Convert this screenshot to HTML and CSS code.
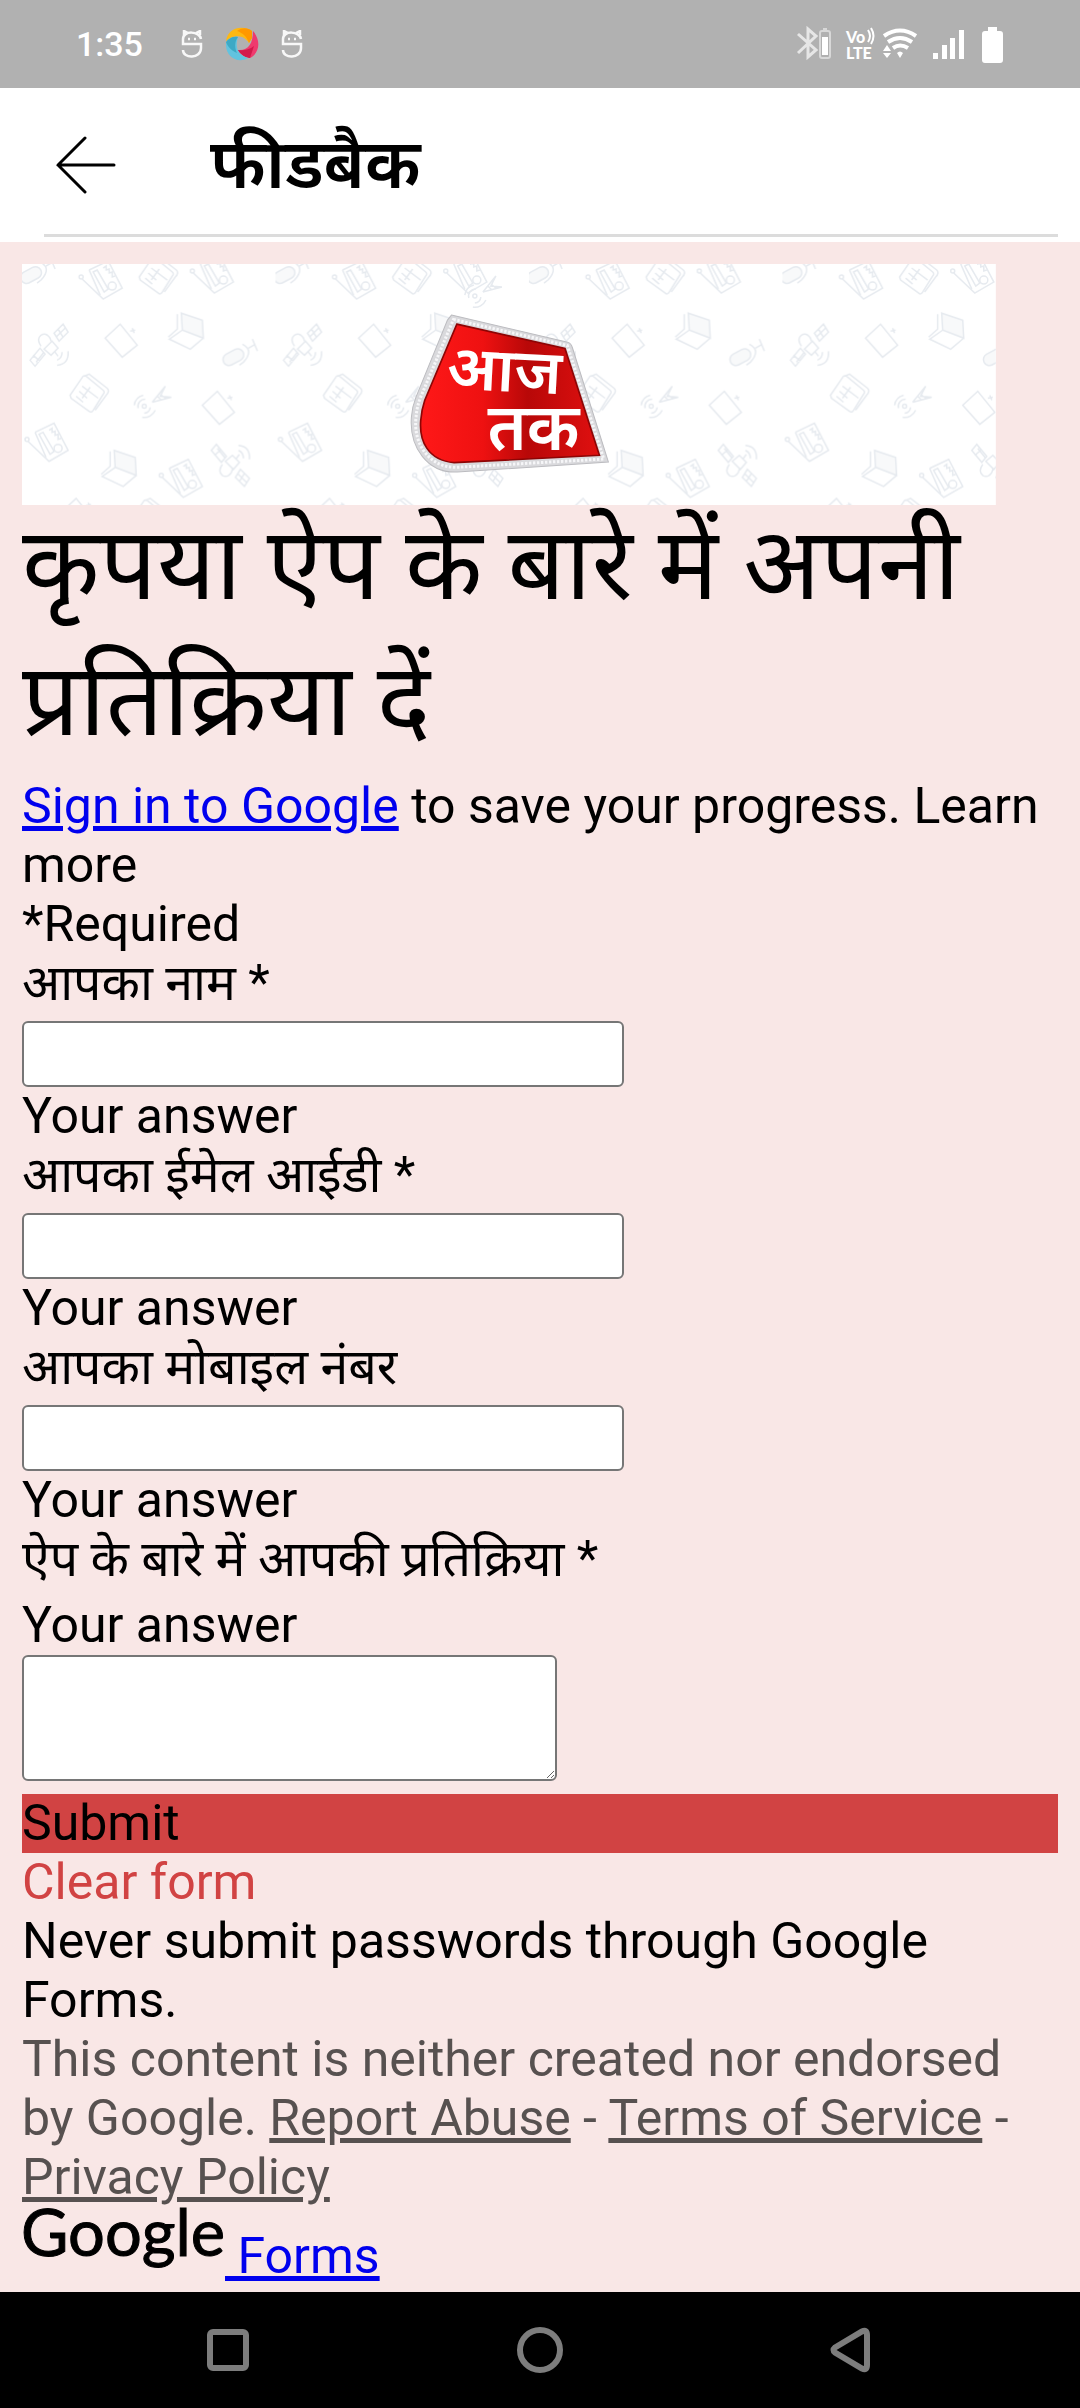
FILE: index.html
```html
<!DOCTYPE html>
<html lang="hi">
<head>
<meta charset="utf-8">
<meta name="viewport" content="width=device-width, initial-scale=1">
<title>फीडबैक</title>
<link rel="stylesheet" href="styles.css">
</head>
<body>
<div class="status-bar">
  <div class="status-left">
    <time class="clock">1:35</time>
    <svg class="badge-icon" width="22" height="28" viewBox="0 0 22 28" fill="none" stroke="#f8f8f8" stroke-width="2.500"><path d="M20 9C19 1 2 0 2 9V14H20V18C20 29 2 29 2 20"/><path d="M3 5V1L7 3M19 5V1L15 3"/><path d="M7 9H9M13 9H15"/></svg>
    <svg class="ball-icon" width="34" height="34" viewBox="0 0 34 34"><path d="M1 14C3 0 18-2 27 4V11L24 16C18 7 8 8 1 14Z" fill="#fdb813"/><path d="M12 4C18 0 23 1 27 4V11L24 16C22 10 18 6 12 4Z" fill="#ff9800"/><path d="M28 4C36 13 35 26 25 31C20 29 15 27 13 23C23 24 28 17 28 4Z" fill="#ef3a6e"/><path d="M13 23C18 24 24 23 29 19L25 31C20 31 15 27 13 23Z" fill="#d3194b"/><path d="M13 10C9 23 15 29 23 31C13 37 1 30 1 18C1 12 7 9 13 10Z" fill="#62c3df"/><path d="M13 10C9 15 10 22 12 26C5 23 2 18 1 15C4 11 8 9 13 10Z" fill="#3da9c5"/></svg>
    <svg class="badge-icon" width="22" height="28" viewBox="0 0 22 28" fill="none" stroke="#f8f8f8" stroke-width="2.500"><path d="M20 9C19 1 2 0 2 9V14H20V18C20 29 2 29 2 20"/><path d="M3 5V1L7 3M19 5V1L15 3"/><path d="M7 9H9M13 9H15"/></svg>
  </div>
  <svg class="status-right" width="208" height="38" viewBox="0 0 208 38" fill="#fff">
    <path d="M2 9 20 25 12 32V4L20 11 2 28" fill="none" stroke="#e6e6e6" stroke-width="3"/>
    <rect x="24" y="6" width="10" height="27" rx="2" fill="none" stroke="#d8d8d8" stroke-width="2"/><path d="M27 3H31V5H27Z" fill="#d8d8d8"/><path d="M26 12H32V30H26Z"/>
    <text x="50" y="18" font-size="16" class="volte">Vo</text><path d="M72 5Q76 11 72 17M75 3Q80 11 75 19" fill="none" stroke="#fff" stroke-width="2"/><text x="50" y="34" font-size="16" class="volte">LTE</text>
    <g fill="none" stroke="#fff" stroke-width="4"><path d="M88 11Q104 0 120 11"/><path d="M92 17Q104 9 116 17"/><path d="M97 23Q104 18 112 23"/></g><path d="M101 28Q104 25 107 28L104 33Z"/><path d="M87 26 91 20 95 26ZM87 28H95L91 33Z"/>
    <path d="M137 28H142V34H137ZM146 20H151V34H146ZM154 13H159V34H154ZM163 5H168V34H163Z"/>
    <path d="M192 2H201V6H204Q207 6 207 9V35Q207 38 204 38H189Q186 38 186 35V9Q186 6 189 6H192Z"/>
  </svg>
</div>

<header class="app-bar">
  <div class="app-bar-inner">
    <button class="back" type="button" aria-label="Back"><svg width="60" height="58" viewBox="0 0 60 58" fill="none" stroke="#000" stroke-width="3" stroke-linecap="round"><path d="M29 2 2 29 29 56M2 29H58"/></svg></button>
    <h2 class="title">फीडबैक</h2>
  </div>
</header>

<main class="page">
  <svg class="banner" viewBox="0 0 972 241" role="img" aria-label="आज तक">
    <defs>
      <g id="tv"><path d="M-16-2-1-16 16 5 1 17Z"/><path d="M9-9 14-10M11-12 13-7"/></g>
      <g id="laptop"><path d="M-5-18 16-11 17 7-4-1Z" fill="#f8f9fa"/><path d="M-4-1-17 8 4 18 17 7M-9-17V-2L-18 6"/></g>
      <g id="mic"><rect x="-18" y="-3" width="22" height="12" rx="6" transform="rotate(-28 -7 3)" fill="#f8f9fa"/><path d="M2-10Q14-4 3 8L-1 11M8-6 15-10M12-15 17-3"/></g>
      <g id="news"><path d="M-20 2-7-17Q-6-18-4-17L13-3Q15-1 13 1L3 17Q1 20-1 18L-19 5ZM-6-17-1-19 17-5Q20-2 16 2L5 17M-8-7 8 5M-11-2-3 5M-14 3-7 9M0-6-8 5"/></g>
      <g id="antenna"><circle cx="-8" cy="4" r="2"/><path d="M-14 6A7 7 0 0 1-7-3M-2 5A7 7 0 0 1-8 11M-18 3A12 12 0 0 1-9-7M3 8A12 12 0 0 1-10 15M0 0 13-16 10-10 8-6 19-5 0 0M5-6 9-2M8-8 13-4"/></g>
      <g id="radio"><path d="M-12-10 7-19 21 8 2 19-19-1"/><path d="M-12-10-1 15"/><circle cx="-20" cy="-3" r="2"/><circle cx="11" cy="6" r="4"/><path d="M-8-8-4-10 7 9 3 12ZM2-12 5-14 5-10 8-11 8-7 11-8 11-3 14-4"/></g>
      <g id="sat"><path d="M4-12 13-21 18-13 9-4ZM8-16 13-8M6-8 15-17M-20 15-10 3-5 9-15 21ZM-17 10-10 16M-14 17-6 7M-9 1Q-14-6-9-10-4-13 0-7L1-4M-6 4 2-4 8 3 1 10ZM5 7 8 11M18 6Q19 19 7 20M12 7Q12 13 7 15"/></g>
      <pattern id="doodles" width="253" height="260" patternUnits="userSpaceOnUse">
        <g fill="none" stroke="#e6eaef" stroke-width="1.500">
          <use href="#mic" x="16" y="8"/><use href="#radio" x="79" y="16"/><use href="#news" x="137" y="11"/><use href="#radio" x="190" y="10"/>
          <use href="#sat" x="28" y="81"/><use href="#tv" x="99" y="76"/><use href="#laptop" x="164" y="67"/><use href="#mic" x="218" y="90"/>
          <use href="#news" x="68" y="129"/><use href="#antenna" x="130" y="138"/><use href="#tv" x="196" y="143"/>
          <use href="#radio" x="25" y="178"/><use href="#laptop" x="97" y="204"/><use href="#radio" x="159" y="214"/><use href="#sat" transform="translate(209 201) scale(1 -1)"/>
          <use href="#tv" x="55" y="250"/><use href="#news" x="129" y="253"/>
        </g>
      </pattern>
      <linearGradient id="red" x1="0" y1="0" x2="1" y2="0"><stop offset="0" stop-color="#ff1818"/><stop offset=".35" stop-color="#ee1111"/><stop offset=".6" stop-color="#b80808"/><stop offset="1" stop-color="#e01010"/></linearGradient>
    </defs>
    <rect width="972" height="241" fill="#fff"/>
    <rect width="972" height="241" fill="url(#doodles)"/>
    <use href="#antenna" x="460" y="28" fill="none" stroke="#e6eaef" stroke-width="1.500"/>
    <g transform="translate(368 36) scale(.3333)">
      <path d="M182 45 530 126Q540 129 544 142L652 485 200 515C110 520 55 440 62 350Q64 320 76 290L170 60Z" fill="#d9d9dc" stroke="#bcbcc0" stroke-width="3"/>
      <path d="M188 58 529 136 638 476 194 501C115 500 66 430 76 350Q78 320 90 290Z" fill="none" stroke="#f6f6f8" stroke-width="9" stroke-dasharray="7 5"/>
      <path d="M198 72 522 145 625 465 190 487C110 480 85 420 90 360Q92 330 102 300Z" fill="url(#red)" stroke="#8d0505" stroke-width="5"/>
      <g class="logo-text">
        <text x="166" y="264" font-size="184" transform="rotate(3 166 264)">आज</text>
        <text x="290" y="448" font-size="196">तक</text>
      </g>
    </g>
  </svg>

  <h1 class="form-title">कृपया ऐप के बारे में अपनी प्रतिक्रिया दें</h1>

  <p><a href="#signin">Sign in to Google</a> to save your progress. Learn more</p>
  <p>*Required</p>

  <form class="form">
    <label for="name">आपका नाम *</label>
    <input class="field" id="name" type="text" aria-describedby="name-hint">
    <p id="name-hint">Your answer</p>
    <label for="email">आपका ईमेल आईडी *</label>
    <input class="field" id="email" type="text" aria-describedby="email-hint">
    <p id="email-hint">Your answer</p>
    <label for="mobile">आपका मोबाइल नंबर</label>
    <input class="field" id="mobile" type="text" aria-describedby="mobile-hint">
    <p id="mobile-hint">Your answer</p>
    <label for="comment">ऐप के बारे में आपकी प्रतिक्रिया *</label>
    <p class="comment-hint" id="comment-hint">Your answer</p>
    <textarea class="comment" id="comment" aria-describedby="comment-hint"></textarea>
    <button class="submit" type="submit">Submit</button>
    <button class="clear" type="reset">Clear form</button>
  </form>

  <p>Never submit passwords through Google Forms.</p>
  <p class="legal">This content is neither created nor endorsed by Google. <a href="#abuse">Report Abuse</a> - <a href="#terms">Terms of Service</a> - <a href="#privacy">Privacy Policy</a></p>
  <p><a href="#forms"><svg class="google" width="203" height="66" viewBox="0 0 203 66"><text x="-1" y="49">Google</text></svg> Forms</a></p>
</main>

<nav class="nav-bar" aria-label="System">
  <button type="button" aria-label="Recent apps"><svg width="48" height="48" viewBox="0 0 48 48"><rect x="6" y="6" width="36" height="36" rx="3"/></svg></button>
  <button type="button" aria-label="Home"><svg width="48" height="48" viewBox="0 0 48 48"><circle cx="24" cy="24" r="20"/></svg></button>
  <button type="button" aria-label="Back"><svg width="48" height="48" viewBox="0 0 48 48"><path d="M7 21.500 34 5.500Q39 3 39 9V39Q39 45 34 42.500L7 26.500Q4 24 7 21.500Z"/></svg></button>
</nav>
</body>
</html>
```

FILE: styles.css
```css
* {
  box-sizing: border-box;
}

body {
  margin: 0;
  min-height: 100vh;
  display: flex;
  flex-direction: column;
  background: #f9e7e6;
  color: #000;
  font-family: Roboto, "Noto Sans", "Noto Sans Devanagari", sans-serif;
  font-size: 50px;
  line-height: 59px;
}

h1, h2, p {
  margin: 0;
  font-weight: 400;
}

button {
  padding: 0;
  border: 0;
  background: none;
  color: inherit;
  font: inherit;
}

svg {
  flex: none;
}

a {
  color: #0000ee;
}

.status-bar {
  display: flex;
  align-items: center;
  justify-content: space-between;
  height: 88px;
  padding: 0 76px;
  background: #b1b1b1;
}

.status-left {
  display: flex;
  align-items: center;
  gap: 22px;
}

.clock {
  margin-right: 16px;
  color: #fff;
  font-size: 34px;
  font-weight: 500;
  line-height: 40px;
}

.volte {
  font-family: Lato, sans-serif;
  font-weight: 900;
}

.app-bar {
  height: 154px;
  padding: 0 22px 5px 44px;
  background: #fff;
}

.app-bar-inner {
  display: flex;
  align-items: center;
  height: 149px;
  padding-top: 8px;
  border-bottom: 3px solid #dcdcdc;
}

.back {
  display: flex;
  margin: 0 94px 0 12px;
}

.title {
  font-size: 69px;
  font-weight: 600;
  line-height: 98px;
}

.page {
  flex: 1;
  padding: 22px 22px 0;
}

.banner {
  display: block;
  width: 94%;
  margin-bottom: -8px;
}

.logo-text {
  fill: #fff;
  font-weight: 600;
}

.form-title {
  padding-bottom: 8px;
  font-size: 101px;
  line-height: 136px;
}

.form label,
.submit,
.clear {
  display: block;
}

.field,
.comment {
  display: block;
  border: 2px solid #767676;
  border-radius: 6px;
  background: #fff;
  font: inherit;
}

.field {
  width: 602px;
  max-width: 100%;
  height: 66px;
  margin-top: 8px;
}

.comment-hint {
  margin-top: 7px;
}

.comment {
  width: 535px;
  max-width: 100%;
  height: 126px;
  margin-bottom: 13px;
}

.submit {
  width: 100%;
  background: #d14343;
  text-align: left;
}

.clear {
  color: #d14343;
}

.legal,
.legal a {
  color: #575150;
}

.google {
  overflow: visible;
  font-family: Lato, sans-serif;
  font-size: 65px;
  stroke: #000;
  stroke-width: 1px;
}

.nav-bar {
  display: grid;
  grid-template-columns: repeat(3, 1fr);
  height: 116px;
  padding: 0 72px;
  background: #000;
}

.nav-bar button {
  display: flex;
  align-items: center;
  justify-content: center;
}

.nav-bar svg {
  fill: none;
  stroke: #7d7d7d;
  stroke-width: 6;
}
```
